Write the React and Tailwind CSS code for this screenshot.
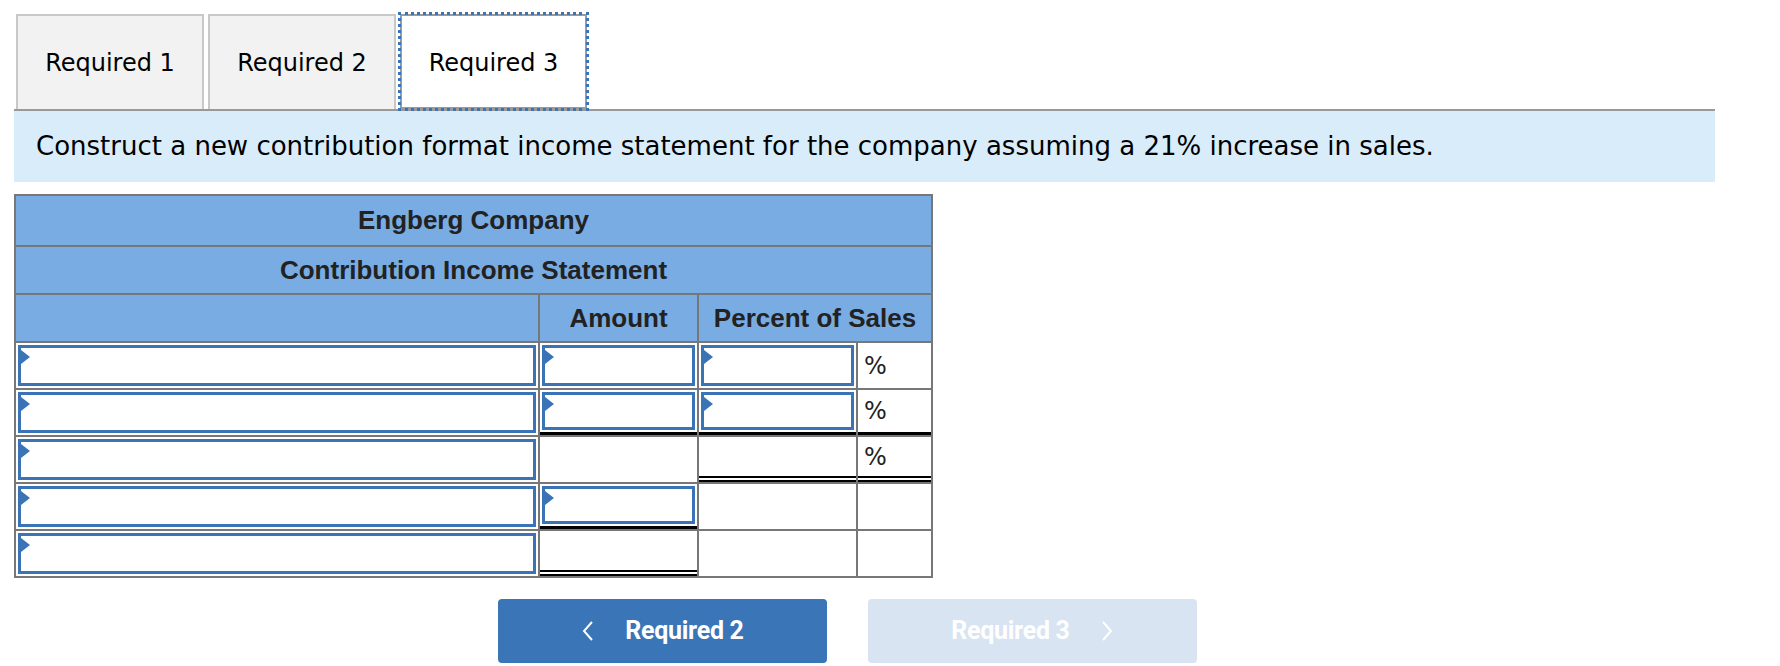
import React from 'react';

const BLUE = 'border-[#3a74b7]';

const Marker = () => (
    <span className="absolute left-0 top-[2px] w-0 h-0 border-y-[7px] border-y-transparent border-l-[9px] border-l-[#3a74b7]" />
);

const InputCell = ({ marker = true, under }) => (
    <div className={`relative h-[45px] bg-white p-[2px] ${under || ''}`}>
        <div className={`relative h-full border-[3px] ${BLUE} bg-white`}>{marker && <Marker />}</div>
    </div>
);

const Cell = ({ children, under }) => (
    <div className={`h-[45px] bg-white flex items-center px-[6px] ${under || ''}`}>{children}</div>
);

const Pct = () => <span className="text-[24px] text-[#222]" style={{ fontFamily: '"DejaVu Sans", sans-serif' }}>%</span>;

const single = 'border-b-[3px] border-b-black';
const double = 'border-b-[6px] border-double border-b-black';

const TabButton = ({ label, active }) => (
    <div
        className={`h-[95px] flex items-center justify-center text-[24px] text-black ${
            active
                ? 'w-[187px] bg-white border-2 border-[#9a9a9a] outline-[3px] outline-dotted outline-[#3a74b7] -outline-offset-[1px] pt-[3px]'
                : 'w-[188px] bg-[#f2f2f2] border-2 border-b-0 border-[#c8c8c8]'
        }`}
    >
        {label}
    </div>
);

export default function App() {
    return (
        <div className="w-[1780px] h-[666px] bg-white pl-[14px] pt-[14px]" style={{ fontFamily: '"DejaVu Sans", Verdana, sans-serif' }}>
            <div className="flex gap-[4px] pl-[2px] items-end">
                <TabButton label="Required 1" />
                <TabButton label="Required 2" />
                <TabButton label="Required 3" active />
            </div>
            <div className="w-[1701px] h-[73px] border-t-2 border-[#999] bg-[#d9ecfa] flex items-center pl-[22px] text-[26px] text-black">
                Construct a new contribution format income statement for the company assuming a 21% increase in sales.
            </div>
            <div
                className="mt-[12px] w-[919px] border-2 border-[#777] bg-[#777] grid grid-cols-[522px_157px_157px_73px] gap-[2px]"
                style={{ fontFamily: '"Liberation Sans", Arial, sans-serif' }}
            >
                <div className="col-span-4 h-[49px] bg-[#79ace2] flex items-center justify-center font-bold text-[26px] text-[#222]">Engberg Company</div>
                <div className="col-span-4 h-[46px] bg-[#79ace2] flex items-center justify-center font-bold text-[26px] text-[#222]">Contribution Income Statement</div>
                <div className="h-[46px] bg-[#79ace2]" />
                <div className="h-[46px] bg-[#79ace2] flex items-center justify-center font-bold text-[26px] text-[#222]">Amount</div>
                <div className="col-span-2 h-[46px] bg-[#79ace2] flex items-center justify-center font-bold text-[26px] text-[#222]">Percent of Sales</div>

                <InputCell /><InputCell /><InputCell /><Cell><Pct /></Cell>

                <InputCell /><InputCell under={single} /><InputCell under={single} /><Cell under={single}><Pct /></Cell>

                <InputCell /><Cell /><Cell under={double} /><Cell under={double}><Pct /></Cell>

                <InputCell /><InputCell under={single} /><Cell /><Cell />

                <InputCell /><Cell under={double} /><Cell /><Cell />
            </div>
            <div className="flex gap-[41px] ml-[484px] mt-[21px]" style={{ fontFamily: 'Roboto, "Liberation Sans", sans-serif' }}>
                <button className="w-[329px] h-[64px] rounded-[4px] bg-[#3a75b8] text-white font-bold text-[25px] flex items-center justify-center gap-[30px]">
                    <svg width="14" height="22" viewBox="0 0 14 22" fill="none" stroke="white" strokeWidth="2"><path d="M11 2 L3 11 L11 20" /></svg>
                    <span className="tracking-[-0.3px]">Required 2</span>
                </button>
                <button className="w-[329px] h-[64px] rounded-[4px] bg-[#d8e4f2] text-white font-bold text-[25px] flex items-center justify-center gap-[30px]">
                    <span className="tracking-[-0.3px]">Required 3</span>
                    <svg width="14" height="22" viewBox="0 0 14 22" fill="none" stroke="white" strokeWidth="2"><path d="M3 2 L11 11 L3 20" /></svg>
                </button>
            </div>
        </div>
    );
}
